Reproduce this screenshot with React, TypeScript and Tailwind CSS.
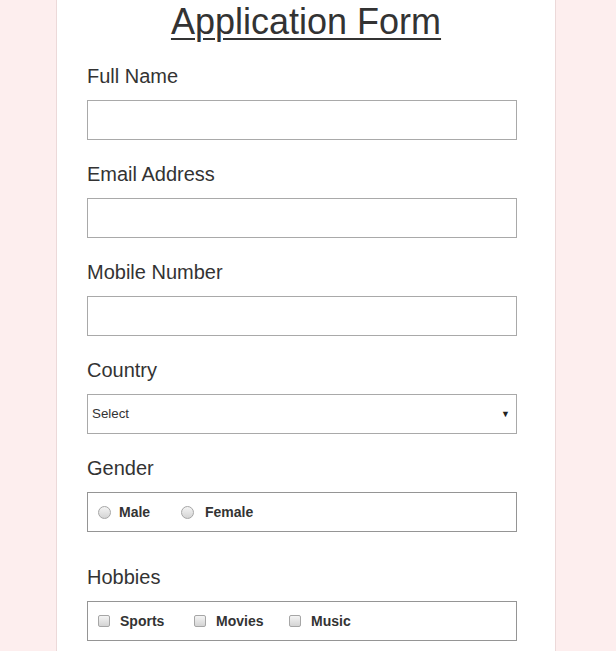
import { useState } from "react";

function Label({ children }: { children: React.ReactNode }) {
    return <label className="block text-[20px] leading-[22px] text-[#333]">{children}</label>;
}

function Radio({ name, label, className }: { name: string; label: string; className?: string }) {
    return (
        <label className={"flex items-center gap-2 " + (className ?? "")}>
            <input
                type="radio"
                name={name}
                className="appearance-none w-[13px] h-[13px] rounded-full border border-[#a6a6a6] bg-gradient-to-b from-[#f4f4f4] to-[#d4d4d4] checked:from-[#bbb] checked:to-[#888]"
            />
            <span className="text-[14px] font-bold text-[#333]">{label}</span>
        </label>
    );
}

function Check({ label, className }: { label: string; className?: string }) {
    return (
        <label className={"flex items-center gap-[10px] " + (className ?? "")}>
            <input
                type="checkbox"
                className="appearance-none w-[12px] h-[12px] rounded-[2px] border border-[#a6a6a6] bg-gradient-to-b from-[#f4f4f4] to-[#d4d4d4] checked:from-[#bbb] checked:to-[#888]"
            />
            <span className="text-[14px] font-bold text-[#333]">{label}</span>
        </label>
    );
}

export default function App() {
    const [country, setCountry] = useState("");

    return (
        <div
            className="min-h-screen flex justify-center pr-1 bg-[#fdeeee]"
            style={{ fontFamily: '"Liberation Sans", Arial, sans-serif' }}
        >
            {/* 폼 카드 */}
            <div className="w-[500px] min-h-screen bg-white border-x border-[#ecd9d9] px-[30px] pt-[2px] pb-10">
                <h1 className="text-center text-[36px] leading-[40px] text-[#333] underline underline-offset-[4px] decoration-[2px]">
                    Application Form
                </h1>

                <form className="mt-[23px] flex flex-col" onSubmit={(e) => e.preventDefault()}>
                    {/* Full Name */}
                    <Label>Full Name</Label>
                    <input type="text" className="mt-[13px] h-[40px] w-[430px] border border-[#a9a9a9] px-2 text-sm" />

                    {/* Email */}
                    <div className="mt-[23px]">
                        <Label>Email Address</Label>
                    </div>
                    <input type="email" className="mt-[13px] h-[40px] w-[430px] border border-[#a9a9a9] px-2 text-sm" />

                    {/* Mobile */}
                    <div className="mt-[23px]">
                        <Label>Mobile Number</Label>
                    </div>
                    <input type="tel" className="mt-[13px] h-[40px] w-[430px] border border-[#a9a9a9] px-2 text-sm" />

                    {/* Country */}
                    <div className="mt-[23px]">
                        <Label>Country</Label>
                    </div>
                    <div className="mt-[13px] relative w-[430px]">
                        <select
                            value={country}
                            onChange={(e) => setCountry(e.target.value)}
                            className="appearance-none h-[40px] w-full border border-[#a9a9a9] bg-white pl-[4px] text-[13.33px] text-[#333]"
                        >
                            <option value="">Select</option>
                            <option value="in">India</option>
                            <option value="us">USA</option>
                        </select>
                        <span className="pointer-events-none absolute right-[7px] top-[14px] text-[9px] text-[#222]">▼</span>
                    </div>

                    {/* Gender */}
                    <div className="mt-[23px]">
                        <Label>Gender</Label>
                    </div>
                    <div className="mt-[13px] h-[40px] w-[430px] border border-[#959595] flex items-center pl-[10px]">
                        <Radio name="gender" label="Male" className="w-[83px]" />
                        <Radio name="gender" label="Female" className="gap-[11px]" />
                    </div>

                    {/* Hobbies */}
                    <div className="mt-[34px]">
                        <Label>Hobbies</Label>
                    </div>
                    <div className="mt-[13px] h-[40px] w-[430px] border border-[#959595] flex items-center pl-[10px]">
                        <Check label="Sports" className="w-[96px]" />
                        <Check label="Movies" className="w-[95px]" />
                        <Check label="Music" />
                    </div>
                </form>
            </div>
        </div>
    );
}
